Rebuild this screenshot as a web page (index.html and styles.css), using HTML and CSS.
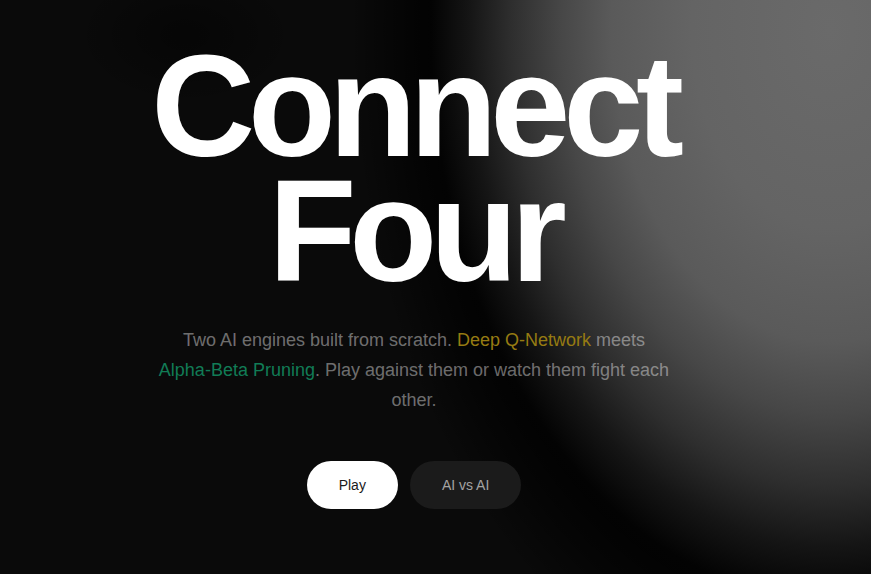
FILE: index.html
```html
<!DOCTYPE html>
<html lang="en">
<head>
<meta charset="utf-8">
<title>Connect Four</title>
<link rel="stylesheet" href="styles.css">
</head>
<body>
<main class="hero">
  <h1 class="title"><span class="title-line">Connect</span><span class="title-line">Four</span></h1>
  <p class="lead">Two AI engines built from scratch. <span class="dqn">Deep Q-Network</span> meets <span class="ab">Alpha-Beta Pruning</span>. Play against them or watch them fight each other.</p>
  <div class="actions">
    <button class="btn btn-primary">Play</button>
    <button class="btn btn-secondary">AI vs AI</button>
  </div>
</main>
</body>
</html>
```

FILE: styles.css
```css
html, body {
  margin: 0;
  height: 100%;
}

body {
  min-height: 100vh;
  overflow: hidden;
  font-family: "Liberation Sans", Arial, sans-serif;
  background-color: #0a0a0a;
  background-image:
    radial-gradient(ellipse 420px 600px at 830px 30px,
      #6a6a6a 0%,
      #646464 33%,
      #5a5a5a 52%,
      #474747 64%,
      #2e2e2e 76%,
      #151515 86%,
      #030303 95%,
      rgba(0,0,0,0) 100%),
    radial-gradient(ellipse 480px 700px at 830px 30px,
      #000 78%,
      rgba(0,0,0,0.5) 90%,
      rgba(0,0,0,0) 100%),
    radial-gradient(ellipse 110px 70px at 185px 35px,
      rgba(0,0,0,0.45) 0%,
      rgba(0,0,0,0) 100%);
}

.hero {
  display: flex;
  flex-direction: column;
  align-items: center;
  padding: 44px 43px 0 0;
}

.title {
  margin: 0;
  font-size: 144px;
  line-height: 125px;
  font-weight: 700;
  letter-spacing: -0.05em;
  color: #ffffff;
  text-align: center;
}

.title-line {
  display: block;
}

.lead {
  margin: 31px 0 0;
  max-width: 540px;
  font-size: 18px;
  line-height: 30px;
  text-align: center;
  color: rgba(255, 255, 255, 0.42);
}

.dqn {
  color: #967b12;
  white-space: nowrap;
}

.ab {
  color: #117c56;
  white-space: nowrap;
}

.actions {
  display: flex;
  gap: 12px;
  margin-top: 46px;
}

.btn {
  font-family: "Liberation Sans", Arial, sans-serif;
  font-size: 14px;
  line-height: 20px;
  padding: 14px 32px;
  border: 0;
  border-radius: 9999px;
  cursor: pointer;
}

.btn-primary {
  background: #ffffff;
  color: #1a1a1a;
}

.btn-secondary {
  background: #1b1b1b;
  color: #a3a3a3;
}
```
